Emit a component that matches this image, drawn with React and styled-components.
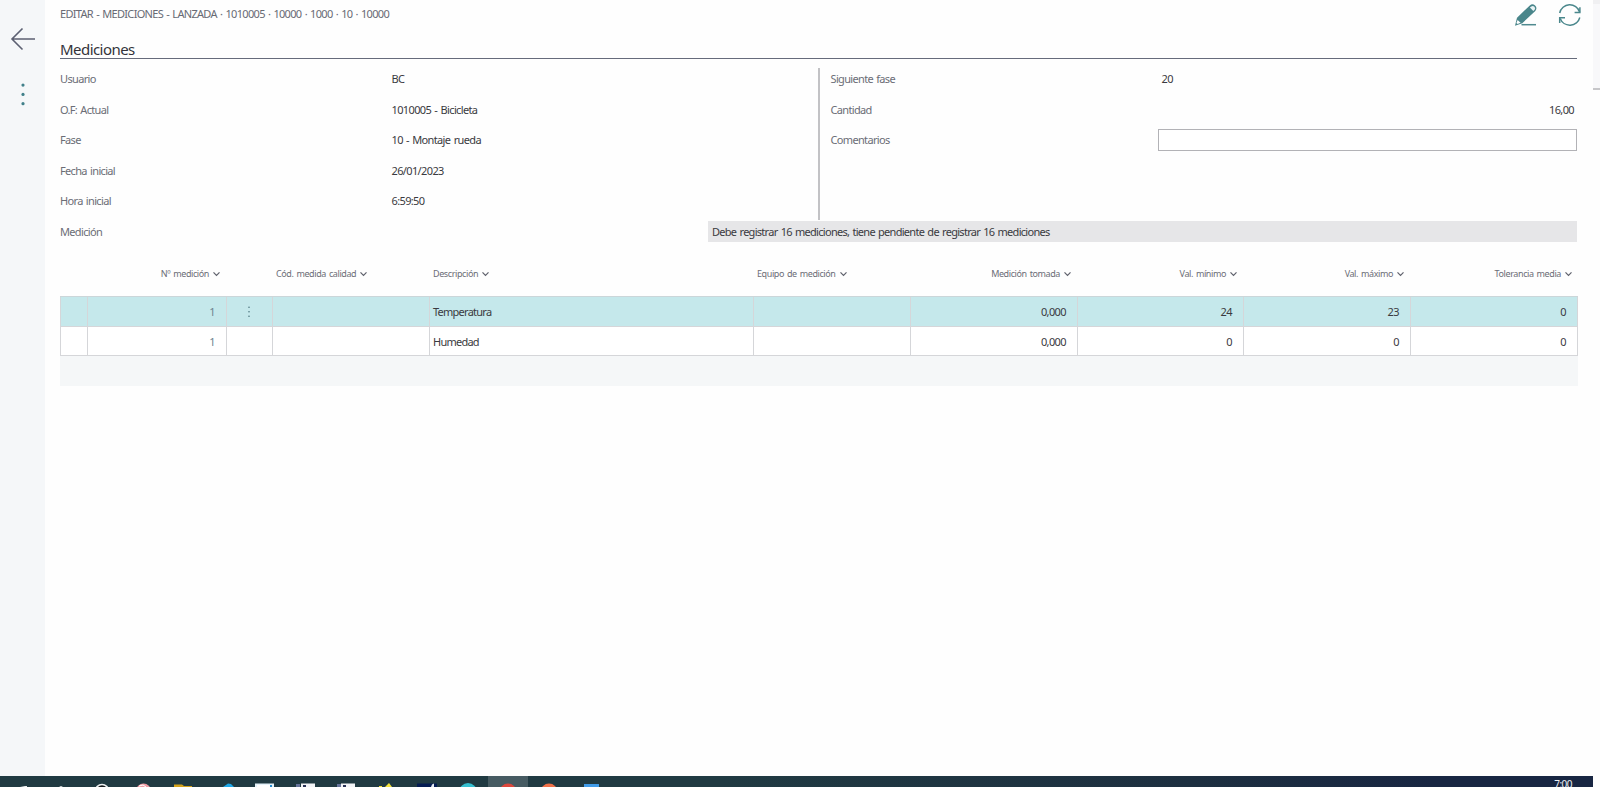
import React from "react";
import styled, { createGlobalStyle } from "styled-components";

const GlobalStyle = createGlobalStyle`
  * {
    box-sizing: border-box;
  }
  body {
    margin: 0;
    background: #fefefe;
    font-family: "Noto Sans", "Open Sans", sans-serif;
    font-size: 11px;
    word-spacing: 1px;
    color: #3a3a40;
    overflow: hidden;
  }
`;

const Screen = styled.div`
  display: flex;
  flex-direction: column;
  height: 787px;
  width: 1600px;
`;

const Body = styled.div`
  display: flex;
  height: 776px;
`;

const Sidebar = styled.nav`
  width: 45px;
  background: #f5f7f9;
  padding-top: 27px;
  display: flex;
  flex-direction: column;
  align-items: center;
  gap: 30.5px;

  svg {
    display: block;
  }
`;

const Main = styled.main`
  width: 1532px;
  padding-left: 15px;
`;

const Gutter = styled.aside`
  margin-left: 16px;
  width: 7px;
  height: 90px;
  background: #f8f8fa;
  border-top: 4px solid #f0f0f2;
  border-bottom: 2px solid #c6c6c9;
`;

const TopBar = styled.header`
  display: flex;
  justify-content: space-between;
  height: 36px;
`;

const Crumb = styled.div`
  line-height: 28px;
  color: #686a74;
  letter-spacing: -0.68px;
`;

const Actions = styled.div`
  display: flex;
  gap: 21px;
  padding-top: 4px;
  margin-right: -5px;

  svg {
    overflow: visible;
  }
`;

const Title = styled.h1`
  margin: 0;
  height: 23px;
  line-height: 26px;
  font-size: 15px;
  font-weight: 400;
  letter-spacing: -0.55px;
  color: #33333a;
  border-bottom: 1px solid #666b7b;
`;

const Groups = styled.section`
  display: flex;
  padding-top: 9px;
`;

const Group = styled.div`
  width: ${({ $width }) => $width}px;
  height: 152px;
  border-left: ${({ $divided }) => ($divided ? "2px solid #c2c2c5" : "none")};
  padding-left: ${({ $divided }) => ($divided ? "10.5px" : "0")};
`;

const Field = styled.div`
  display: flex;
  align-items: center;
  height: 30.5px;
  margin-top: ${({ $shift }) => $shift || 0}px;
`;

const Label = styled.span`
  width: ${({ $width }) => $width}px;
  color: #6b6d76;
  letter-spacing: -0.66px;
`;

const Value = styled.span`
  flex: 1;
  text-align: ${({ $right }) => ($right ? "right" : "left")};
  padding: 0 ${({ $right }) => ($right ? "3px" : "0")} 0 0;
  letter-spacing: -0.63px;
`;

const CommentInput = styled.input`
  width: 419.5px;
  height: 22px;
  margin-left: -4px;
  border: 1px solid #b2b2b6;
  background: #fff;
  outline: none;
`;

const Notice = styled.div`
  flex: 1;
  height: 21px;
  line-height: 21px;
  padding-left: 4px;
  background: #e6e6e8;
  letter-spacing: -0.71px;
`;

const Grid = styled.section`
  width: 1518px;
`;

const gridColumns = "27px 139px 46px 157px 324px 157px 167px 166px 167px 168px";

const HeadRow = styled.div`
  display: grid;
  grid-template-columns: ${gridColumns};
  height: 49.5px;
  padding-top: 18px;
`;

const HeadCell = styled.div`
  display: flex;
  align-items: center;
  gap: 4px;
  height: 18px;
  justify-content: ${({ $right }) => ($right ? "flex-end" : "flex-start")};
  padding: 0 6px 0 4px;
  font-size: 9px;
  color: #6b6d76;
  letter-spacing: -0.4px;
  white-space: nowrap;
`;

const Row = styled.div`
  display: grid;
  grid-template-columns: ${gridColumns};
  height: ${({ $selected }) => ($selected ? "31px" : "29px")};
  background: ${({ $selected }) => ($selected ? "#c5e8eb" : "#fff")};
  border-top: ${({ $selected }) => ($selected ? "1px solid #cbd6d9" : "none")};
  border-bottom: 1px solid #d5d6d9;
`;

const Cell = styled.div`
  display: flex;
  align-items: center;
  justify-content: ${({ $align }) => $align || "flex-start"};
  padding: 0 ${({ $align }) => ($align === "flex-end" ? "11px" : $align ? "2px" : "0")} 0
    ${({ $align }) => ($align ? "0" : "3px")};
  border-left: 1px solid #d5d6d9;
  color: ${({ $muted }) => ($muted ? "#6f8290" : "inherit")};
  letter-spacing: ${({ $align }) => ($align ? "-0.6px" : "-0.75px")};

  &:last-child {
    border-right: 1px solid #d5d6d9;
  }
`;

const GridFooter = styled.div`
  height: 30px;
  background: #f5f7f8;
`;

const Taskbar = styled.footer`
  display: flex;
  justify-content: space-between;
  width: 1593px;
  height: 11px;
  overflow: hidden;
  background: linear-gradient(90deg, #203a42 0%, #203a42 45%, #1d2f40 75%, #182642 90%);
`;

const Clock = styled.span`
  margin-right: 21px;
  font-size: 10px;
  line-height: 17px;
  letter-spacing: -0.5px;
  color: #eef1f6;
`;

const BackIcon = () => (
  <svg width="26" height="25" viewBox="0 0 26 25" fill="none" stroke="#5c6072" strokeWidth="1.6">
    <path d="M12.500 1.500 2 12 12.500 22.500M2 12H25" />
  </svg>
);

const DotsIcon = ({ height, gap, color, r }) => (
  <svg width="6" height={height} fill={color}>
    {[0, 1, 2].map((i) => (
      <circle key={i} cx="3" cy={r + 0.5 + i * gap} r={r} />
    ))}
  </svg>
);

const EditIcon = () => (
  <svg width="22" height="23" viewBox="0 0 22 23">
    <path d="M2 13.800 14.800 1.400a3.900 3.900 0 0 1 5.500 5.500L7.300 19.200 0 21.800z" fill="#4a868b" />
    <path d="M14.900 3.600l1.400-1.200a2.400 2.400 0 0 1 3.300 3.400L18.300 7z" fill="#e9f3f4" />
    <path d="M2.600 16l3 2.700-3 1.300-1.200-1z" fill="#fff" />
    <path d="M6.500 20.700h14.500" stroke="#4f8a8f" strokeWidth="1.500" />
  </svg>
);

const RefreshIcon = () => (
  <svg width="24" height="23" viewBox="0 0 24 23" fill="none" stroke="#4a878c" strokeWidth="1.500">
    <path d="M1.700 9A10.300 10.300 0 0 1 21.600 8M21.800 13.500A10.300 10.300 0 0 1 2.200 14.500" />
    <path d="M21.900 3.200v5.200H16.600M1.700 19v-5.200H7" />
  </svg>
);

const Chevron = () => (
  <svg width="7" height="8" viewBox="0 0 7 8" fill="none" stroke="#5f616c" strokeWidth="1.200">
    <path d="M.5 2.300l3 3.100 3-3.100" />
  </svg>
);

const TaskIcons = () => (
  <svg width="640" height="11" viewBox="0 0 640 11">
    <path d="M20 11l5-1h2v1zM59 11l2-1 2 1z" fill="#e8eced" />
    <circle cx="102" cy="15" r="6.500" fill="#14181b" stroke="#eef1f2" strokeWidth="1.500" />
    <circle cx="143.500" cy="15" r="7.500" fill="#ef9ca4" />
    <path d="M139 10l4-1 3 2" stroke="#fff" fill="none" />
    <path d="M174 8.500h8l2 1.500h8v2h-18z" fill="#d3a21b" />
    <path d="M223 11l5-3.500 3 .5 3 3z" fill="#1ea7e8" />
    <path d="M255 7.500h19V11h-19z" fill="#e5f2fa" />
    <path d="M257 9h13v2h-13z" fill="#fff" />
    <path d="M270 9h2v2h-2z" fill="#238bd0" />
    <path d="M301 7.500h14V11h-14zM341 7.500h14V11h-14z" fill="#f3f4f7" />
    <path d="M296 8h4v3h-4zM337 8h4v3h-4z" fill="#65739a" />
    <path d="M303 9h3v2h-3zM343 9h3v2h-3z" fill="#273155" />
    <path d="M385 11l4-4 3 4zM379 10h3v1h-3z" fill="#f4e33b" />
    <path d="M417 7.500h20V11h-20z" fill="#041c53" />
    <path d="M432 8.500l2-1v3.500h-3z" fill="#e6ebf3" />
    <circle cx="468" cy="16" r="9" fill="#35bfd0" />
    <path d="M488 0h40v11h-40z" fill="#465b62" />
    <circle cx="508" cy="16" r="8.500" fill="#dc473c" />
    <circle cx="549" cy="16" r="8.500" fill="#ef7048" />
    <path d="M584 8h15v3h-15z" fill="#409be8" />
  </svg>
);

const columns = [
  { title: "" },
  { title: "Nº medición", right: true },
  { title: "" },
  { title: "Cód. medida calidad" },
  { title: "Descripción" },
  { title: "Equipo de medición" },
  { title: "Medición tomada", right: true },
  { title: "Val. mínimo", right: true },
  { title: "Val. máximo", right: true },
  { title: "Tolerancia media", right: true },
];

const rows = [
  { no: "1", name: "Temperatura", taken: "0,000", min: "24", max: "23", tolerance: "0", selected: true },
  { no: "1", name: "Humedad", taken: "0,000", min: "0", max: "0", tolerance: "0" },
];

const generalFields = [
  ["Usuario", "BC"],
  ["O.F: Actual", "1010005 - Bicicleta"],
  ["Fase", "10 - Montaje rueda"],
  ["Fecha inicial", "26/01/2023"],
  ["Hora inicial", "6:59:50"],
];

const App = () => {
  return (
    <Screen>
      <GlobalStyle />
      <Body>
        <Sidebar>
          <BackIcon />
          <DotsIcon height={24} gap={9.3} color="#41808a" r={1.6} />
        </Sidebar>
        <Main>
          <TopBar>
            <Crumb>EDITAR - MEDICIONES - LANZADA · 1010005 · 10000 · 1000 · 10 · 10000</Crumb>
            <Actions>
              <EditIcon />
              <RefreshIcon />
            </Actions>
          </TopBar>
          <Title>Mediciones</Title>
          <Groups>
            <Group $width={758}>
              {generalFields.map(([label, value], i) => (
                <Field key={label} $shift={i === 0 ? -4.6 : 0}>
                  <Label $width={331.5}>{label}</Label>
                  <Value>{value}</Value>
                </Field>
              ))}
            </Group>
            <Group $width={759} $divided>
              <Field $shift={-4.6}>
                <Label $width={331}>Siguiente fase</Label>
                <Value>20</Value>
              </Field>
              <Field>
                <Label $width={331}>Cantidad</Label>
                <Value $right>16,00</Value>
              </Field>
              <Field>
                <Label $width={331}>Comentarios</Label>
                <CommentInput aria-label="Comentarios" />
              </Field>
            </Group>
          </Groups>
          <Field $shift={-4}>
            <Label $width={648}>Medición</Label>
            <Notice>Debe registrar 16 mediciones, tiene pendiente de registrar 16 mediciones</Notice>
          </Field>
          <Grid>
            <HeadRow>
              {columns.map((col, i) => (
                <HeadCell key={i} $right={col.right}>
                  {col.title}
                  {col.title && <Chevron />}
                </HeadCell>
              ))}
            </HeadRow>
            {rows.map((row) => (
              <Row key={row.name} $selected={row.selected}>
                <Cell />
                <Cell $align="flex-end" $muted>{row.no}</Cell>
                <Cell $align="center">
                  {row.selected && <DotsIcon height={12} gap={4.5} color="#4f7780" r={0.8} />}
                </Cell>
                <Cell />
                <Cell>{row.name}</Cell>
                <Cell />
                <Cell $align="flex-end">{row.taken}</Cell>
                <Cell $align="flex-end">{row.min}</Cell>
                <Cell $align="flex-end">{row.max}</Cell>
                <Cell $align="flex-end">{row.tolerance}</Cell>
              </Row>
            ))}
            <GridFooter />
          </Grid>
        </Main>
        <Gutter />
      </Body>
      <Taskbar>
        <TaskIcons />
        <Clock>7:00</Clock>
      </Taskbar>
    </Screen>
  );
};

export default App;
